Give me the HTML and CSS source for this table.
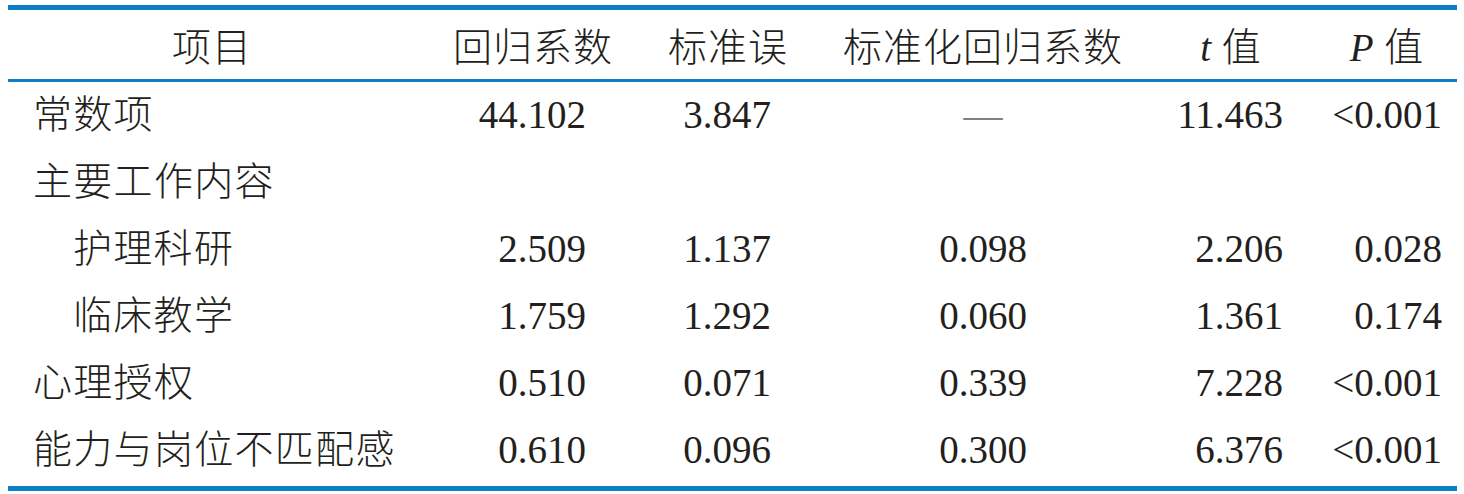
FILE: index.html
```html
<!DOCTYPE html>
<html lang="zh-CN">
<head>
    <meta charset="UTF-8">
    <meta name="viewport" content="width=device-width, initial-scale=1.0">
    <title>回归分析</title>
    <link rel="stylesheet" href="styles.css">
</head>
<body>
    <!-- 多元线性回归结果表 -->
    <table class="reg">
        <colgroup>
            <col class="c-item">
            <col class="c-b">
            <col class="c-se">
            <col class="c-beta">
            <col class="c-t">
            <col class="c-p">
        </colgroup>
        <thead>
            <tr>
                <th>项目</th>
                <th>回归系数</th>
                <th>标准误</th>
                <th>标准化回归系数</th>
                <th><i>t</i> 值</th>
                <th class="p-head"><i>P</i> 值</th>
            </tr>
        </thead>
        <tbody>
            <tr>
                <td class="label">常数项</td>
                <td class="b">44.102</td>
                <td class="se">3.847</td>
                <td class="beta"><span class="dash">—</span></td>
                <td class="t">11.463</td>
                <td class="p">&lt;0.001</td>
            </tr>
            <tr>
                <td class="label">主要工作内容</td>
                <td></td>
                <td></td>
                <td></td>
                <td></td>
                <td></td>
            </tr>
            <tr>
                <td class="label sub">护理科研</td>
                <td class="b">2.509</td>
                <td class="se">1.137</td>
                <td class="beta">0.098</td>
                <td class="t">2.206</td>
                <td class="p">0.028</td>
            </tr>
            <tr>
                <td class="label sub">临床教学</td>
                <td class="b">1.759</td>
                <td class="se">1.292</td>
                <td class="beta">0.060</td>
                <td class="t">1.361</td>
                <td class="p">0.174</td>
            </tr>
            <tr>
                <td class="label">心理授权</td>
                <td class="b">0.510</td>
                <td class="se">0.071</td>
                <td class="beta">0.339</td>
                <td class="t">7.228</td>
                <td class="p">&lt;0.001</td>
            </tr>
            <tr class="last">
                <td class="label">能力与岗位不匹配感</td>
                <td class="b">0.610</td>
                <td class="se">0.096</td>
                <td class="beta">0.300</td>
                <td class="t">6.376</td>
                <td class="p">&lt;0.001</td>
            </tr>
        </tbody>
    </table>
</body>
</html>
```

FILE: styles.css
```css
body {
    margin: 0;
    background: #fff;
}

.reg {
    margin: 5px 0 0 8px;
    width: 1449px;
    table-layout: fixed;
    border-collapse: separate;
    border-spacing: 0;
    border-top: 5px solid #0a7fc6;
    border-bottom: 5px solid #0a7fc6;

    /* 西文用 Times 宽度，中文退到 CJK */
    font-family: "Liberation Serif", "Noto Sans CJK SC", serif;
    font-size: 39px;
    font-weight: 300;
    color: #231f20;
}

.c-item { width: 408px; }
.c-b    { width: 234px; }
.c-se   { width: 156px; }
.c-beta { width: 354px; }
.c-t    { width: 142px; }
.c-p    { width: 155px; }

.reg th,
.reg td {
    padding: 0;
    line-height: 1;
    white-space: nowrap;
    box-sizing: border-box;
}

.reg thead th {
    height: 72px;
    padding-top: 6px;
    font-weight: 300;
    text-align: center;
    letter-spacing: 1px;
    border-bottom: 3px solid #0a7fc6;
}

.reg thead .p-head {
    padding-left: 15px;
}

.reg td {
    height: 67px;
    padding-bottom: 3px;
}
.reg .last td {
    height: 69px;
    padding-bottom: 5px;
}

.reg i {
    font-style: italic;
    letter-spacing: 0;
}

.reg .label {
    padding-left: 25px;
    text-align: left;
    letter-spacing: 1.3px;
}
.reg .label.sub {
    padding-left: 65px;
}

.reg .b    { text-align: right; padding-right: 64px; }
.reg .se   { text-align: right; padding-right: 35px; }
.reg .beta { text-align: center; }
.reg .t    { text-align: right; padding-right: 19px; }
.reg .p    { text-align: right; padding-right: 15px; }

.reg .dash {
    color: #808080;
}
```
